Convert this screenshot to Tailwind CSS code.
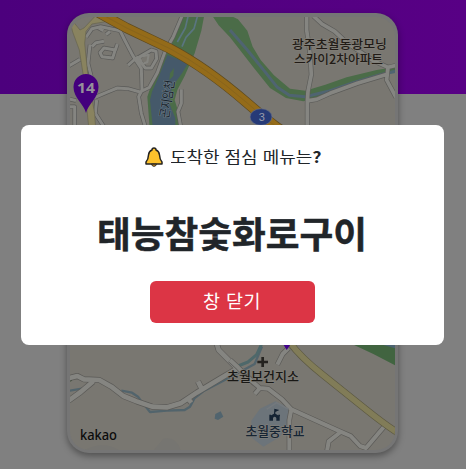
<!DOCTYPE html>
<html lang="ko">
<head>
<meta charset="utf-8">
<title>도착한 점심 메뉴는?</title>
<script src="https://cdn.jsdelivr.net/npm/@tailwindcss/browser@4"></script>
</head>
<body class="relative h-[469px] w-[466px] overflow-hidden bg-[#808080] font-['Noto_Sans_CJK_KR',sans-serif]">
<main class="h-[94px] w-full bg-linear-to-r from-[#4c007d] to-[#580085] pt-[13px]">
  <div class="ml-[67px] h-[440px] w-[331px] overflow-hidden rounded-[22px] bg-[#757575] px-[3px] pt-[4px] pb-[3px] shadow-[0_3px_7px_rgba(0,0,0,0.38)]">
    <svg class="block h-[433px] w-[325px] rounded-[19px]" viewBox="70 17 325 433" fill="none" stroke-linejoin="round">
      <rect x="70" y="17" width="325" height="433" fill="#797771"/>
      <!-- upper left: river, highway, local roads -->
      <g transform="translate(60 0) scale(.33333)">
        <path d="M364 40H434L424 92L404 160L374 228L352 270L344 300L358 345V400H270L262 290L268 272L292 225L320 160Z" fill="#4b6c48"/>
        <path d="M322 165L384 190L366 220L336 262L328 310L346 355V400H280L270 300L276 275L298 226Z" fill="#45596a"/>
        <path d="M330 220L342 204L340 228L328 240Z" fill="#4b6c48"/>
        <path d="M384 50L376 84L352 126M412 50L402 86L378 112L366 140" stroke="#5a7580" stroke-width="5"/>
        <g stroke="#5a5a58" stroke-width="13">
          <path d="M366 48L340 110L316 152L292 218L268 262L240 276L204 266L172 264L138 278L100 294M78 112L96 86L122 80L180 92L194 120L218 166L244 206L246 270L236 290L244 340L262 400M204 196L222 180L274 150L288 154L290 176L274 204L256 204L228 170M96 140L108 128L132 124M90 134L84 190L94 230M26 198L60 178M364 268V310L354 335L366 400M24 296L48 302M110 300L106 340L138 390M30 320H44V400"/>
          <path d="M150 94L138 104M130 92L116 84M172 132L166 150L132 144L120 158L126 170L158 174L166 148"/>
        </g>
        <g stroke="#858581" stroke-width="9">
          <path d="M366 48L340 110L316 152L292 218L268 262L240 276L204 266L172 264L138 278L100 294M78 112L96 86L122 80L180 92L194 120L218 166L244 206L246 270L236 290L244 340L262 400M204 196L222 180L274 150L288 154L290 176L274 204L256 204L228 170M96 140L108 128L132 124M90 134L84 190L94 230M26 198L60 178M364 268V310L354 335L366 400M24 296L48 302M110 300L106 340L138 390M30 320H44V400"/>
          <path d="M150 94L138 104M130 92L116 84M172 132L166 150L132 144L120 158L126 170L158 174L166 148"/>
        </g>
        <path d="M238 172L266 164L262 186L248 192Z" stroke="#858581" stroke-width="6"/>
        <path d="M26 48L60 90L72 84L106 48H160L132 66L96 72L78 94L74 130L84 230L104 340L108 400H88L72 240L58 150L38 96Z" fill="#89835f" stroke="#66634f" stroke-width="2"/>
        <path d="M68 48L76 66L66 82L54 70L46 48Z" fill="#797771"/>
        <path d="M116 38L200 84L330 146Q440 204 558 306T672 390" stroke="#5f4b20" stroke-width="31"/>
        <path d="M116 38L200 84L330 146Q440 204 558 306T672 390" stroke="#946b19" stroke-width="27"/>
        <path d="M116 38L200 84L330 146Q440 204 558 306T672 390" stroke="#82601e" stroke-width="2"/>
      </g>
      <text transform="translate(168.5 118.500) rotate(-81)" font-size="12.5" fill="#17222b" stroke="#6d7c86" stroke-width="1.2" paint-order="stroke" textLength="38" lengthAdjust="spacingAndGlyphs">곤지암천</text>
      <!-- upper right: stream and apartment block -->
      <g transform="translate(230 0) scale(.33333)">
        <path d="M-54 46L-34 76L0 112L70 202L120 264L168 294L220 304L256 294L320 266L410 238L500 214V200L440 210L350 232L286 254L226 272L180 266L132 226L92 180L68 140L52 92L24 58L0 46Z" fill="#4b6c48"/>
        <path d="M0 90L52 150L104 214L142 262L178 286L226 290L294 274L370 248L450 224L496 214" stroke="#4f6471" stroke-width="9"/>
        <g stroke="#5c5c59" stroke-width="15"><path d="M230 40V90L240 160L244 224L234 274L232 304V400M236 302L260 298L300 280L382 250L474 222M250 48L276 72L314 94L350 128L430 182L474 202L500 196M474 202L470 240L498 292"/></g>
        <g stroke="#858581" stroke-width="11"><path d="M230 40V90L240 160L244 224L234 274L232 304V400M236 302L260 298L300 280L382 250L474 222M250 48L276 72L314 94L350 128L430 182L474 202L500 196M474 202L470 240L498 292"/></g>
        <ellipse cx="93" cy="351" rx="33" ry="25" fill="#263a77" stroke="#6b7185" stroke-width="2"/>
      </g>
      <text x="258.8" y="121" font-family="Liberation Sans, sans-serif" font-size="11" fill="#999dac">3</text>
      <g font-size="12.5" font-weight="500" fill="#211b16" stroke="#827f78" stroke-width="1.2" paint-order="stroke">
        <text x="292" y="49" textLength="95" lengthAdjust="spacingAndGlyphs">광주초월동광모닝</text>
        <text x="294" y="64" textLength="89" lengthAdjust="spacingAndGlyphs">스카이2차아파트</text>
      </g>
      <!-- numbered marker -->
      <path d="M86 113C84 104 73.500 98 73.500 87A12.500 13 0 0 1 98.500 87C98.500 98 88 104 86 113Z" fill="#44007d"/>
      <text x="77" y="92.500" font-family="Noto Sans, sans-serif" font-size="15" font-weight="700" fill="#96919a" textLength="18" lengthAdjust="spacingAndGlyphs">14</text>
      <!-- lower left -->
      <g transform="translate(60 340) scale(.33333)">
        <path d="M28 152L66 146M184 152L216 158L234 170L244 184L256 198L270 216L320 212L374 210L390 200L404 174L430 154L510 112L584 72L606 20" stroke="#52646c" stroke-width="7"/>
        <circle cx="28" cy="116" r="9" fill="#304526"/>
        <g stroke="#5b5a57" stroke-width="18"><path d="M28 114L52 108L72 118L118 120L154 140L190 168L230 184L276 200L322 202L362 190L410 158L480 116L534 84M100 124L62 156L26 182M426 148L414 124M386 178L394 188M470 10L476 30L530 84L584 130"/></g>
        <g stroke="#858581" stroke-width="14"><path d="M28 114L52 108L72 118L118 120L154 140L190 168L230 184L276 200L322 202L362 190L410 158L480 116L534 84M100 124L62 156L26 182M426 148L414 124M386 178L394 188M470 10L476 30L530 84L584 130"/></g>
        <path d="M466 222L482 214L490 230L474 240L464 236Z" fill="#51646e"/>
        <path d="M70 332Q130 300 180 332M280 332L310 296Q350 288 362 332" fill="#767571"/>
      </g>
      <!-- lower right -->
      <g transform="translate(230 340) scale(.33333)">
        <path d="M366 12H500V78L430 42Z" fill="#416440"/>
        <path d="M450 12H500V26Z" fill="#4b6271"/>
        <path d="M64 242L90 206L136 184L180 204V250L148 292L100 320L66 294Z" fill="#6c747a"/>
        <path d="M24 78L54 66L80 44L94 14" stroke="#4e686a" stroke-width="9"/>
        <g stroke="#5b5a57" stroke-width="16"><path d="M0 60L24 82L66 124L90 144L114 146L156 178L184 208L232 230L330 274L362 288L390 318L408 324L462 260M90 144L74 162M184 208L178 240V340M332 276L296 304L290 340M176 24L158 42L142 74"/></g>
        <g stroke="#858581" stroke-width="12"><path d="M0 60L24 82L66 124L90 144L114 146L156 178L184 208L232 230L330 274L362 288L390 318L408 324L462 260M90 144L74 162M184 208L178 240V340M332 276L296 304L290 340M176 24L158 42L142 74"/></g>
        <path d="M110 208L140 188L176 208" stroke="#74797d" stroke-width="5"/>
        <path d="M180 8Q210 50 280 106T410 210T506 280" stroke="#5c5942" stroke-width="21"/>
        <path d="M180 8Q210 50 280 106T410 210T506 280" stroke="#817c58" stroke-width="17"/>
        <path d="M158 10H184L170 30Z" fill="#41008b"/>
        <path d="M98 51V81M82 66H114" stroke="#77756f" stroke-width="13"/>
        <path d="M98 51V81M82 66H114" stroke="#24221f" stroke-width="8"/>
        <path d="M133 206L148 210L136 216V221L149 229V242H139V234Q134 227 129 234V242H118V229L132 221ZM118 224H123V229H118ZM145 224H150V229H145Z" fill="#142333"/>
      </g>
      <g font-size="13" font-weight="500" stroke="#817f79" stroke-width="1.2" paint-order="stroke">
        <text x="227" y="381" fill="#191815" textLength="72" lengthAdjust="spacingAndGlyphs">초월보건지소</text>
        <text x="245.500" y="435.500" fill="#162534" textLength="59" lengthAdjust="spacingAndGlyphs">초월중학교</text>
      </g>
      <text x="80" y="440" font-family="Noto Sans, sans-serif" font-size="14" font-weight="500" fill="#0b0b0b" textLength="37" lengthAdjust="spacingAndGlyphs">kakao</text>
    </svg>
  </div>
</main>
<section class="absolute top-[125px] left-[21px] flex h-[220px] w-[423px] flex-col items-center rounded-[8px] bg-white text-[#212529]">
  <div class="mt-[20px] flex h-[24px] w-[176px] items-center gap-[8px]">
    <svg class="h-[20px] w-[18px] shrink-0" viewBox="0 0 18 20">
      <path d="M7 3Q7 1 9 1T11 3Q14 4 14.500 8Q14.700 12.500 17 15V17H1V15Q3.300 12.500 3.500 8Q4 4 7 3Z" fill="#fcc12c" stroke="#252321" stroke-width="1.500" stroke-linejoin="round"/>
      <path d="M6.500 17.200H11.500Q11 19.300 9 19.300T6.500 17.200Z" fill="#e69b18" stroke="#252321" stroke-width="1"/>
    </svg>
    <svg class="h-[24px] w-[152px] shrink-0" viewBox="0 0 152 24"><text x="-1" y="17.500" font-size="16" fill="#212529" textLength="151.500" lengthAdjust="spacingAndGlyphs">도착한 점심 메뉴는<tspan font-weight="700">?</tspan></text></svg>
  </div>
  <svg class="mt-[38px] h-[54px] w-[270px]" viewBox="0 0 270 54"><text x="-1" y="41" font-size="36.500" font-weight="700" fill="#212529" stroke="#212529" stroke-width=".5" textLength="270" lengthAdjust="spacingAndGlyphs">태능참숯화로구이</text></svg>
  <button class="mt-[20px] mr-[1px] flex h-[42px] w-[165px] items-center justify-center rounded-[6px] bg-[#dc3545] pb-[4px] text-[18.5px] leading-none tracking-[0.4px] text-white">창 닫기</button>
</section>
</body>
</html>
